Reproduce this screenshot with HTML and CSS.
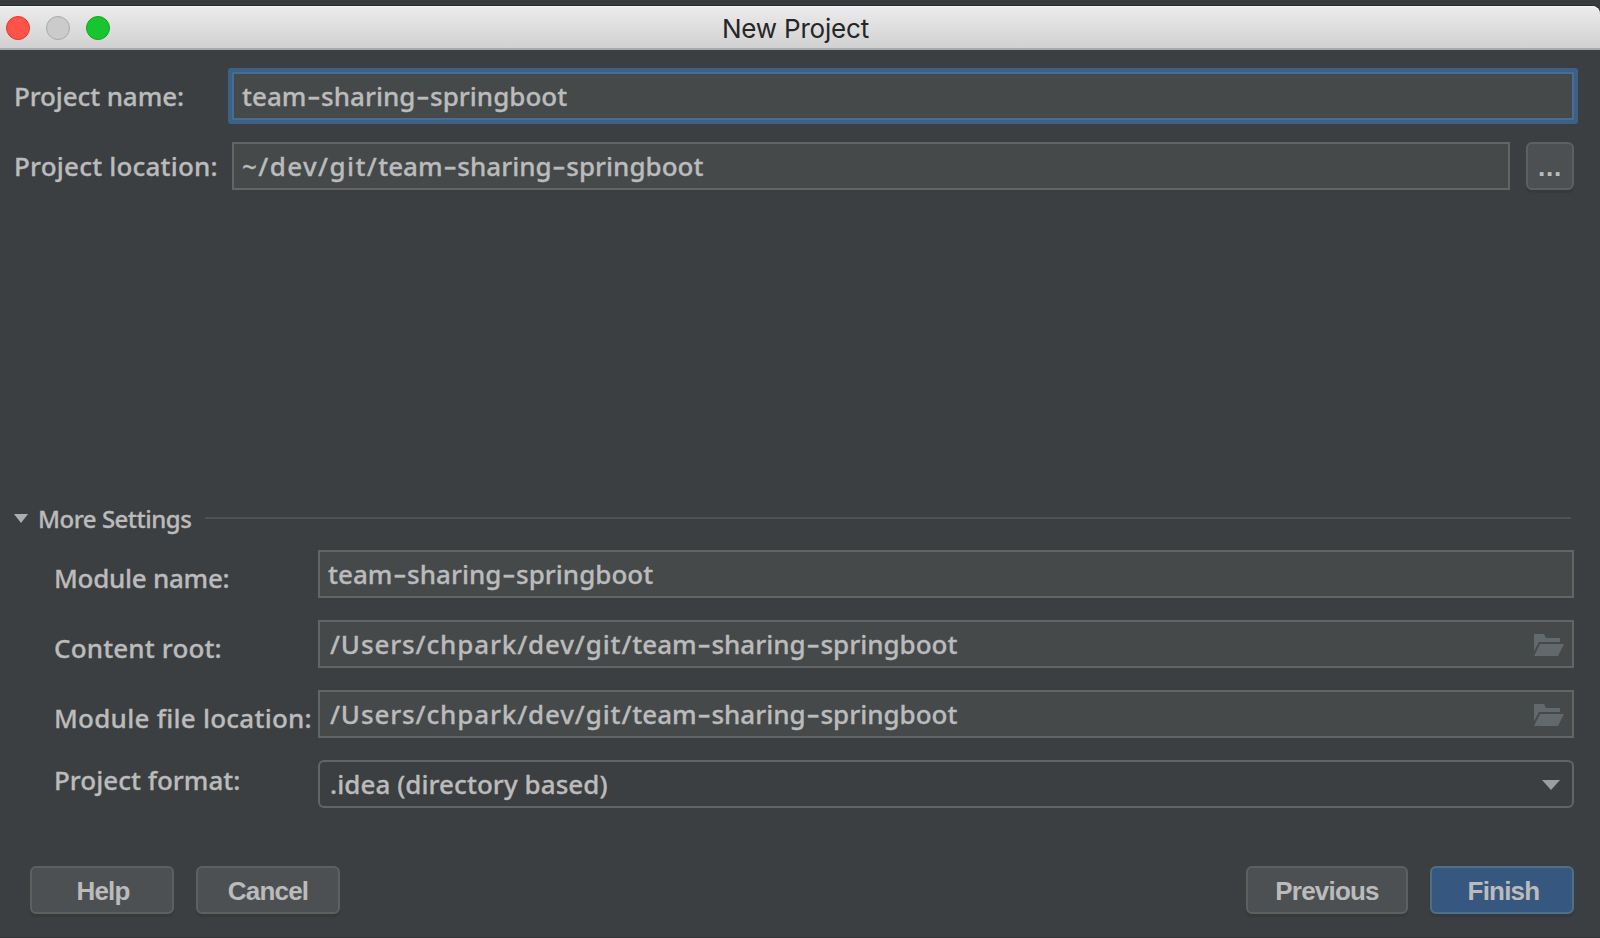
FILE: index.html
```
<!DOCTYPE html>
<html lang="en">
<head>
<meta charset="utf-8">
<title>New Project</title>
<link rel="stylesheet" href="styles.css">
</head>
<body>
<div class="window">
  <header class="titlebar">
    <div class="lights"><i class="light close"></i><i class="light minimize"></i><i class="light zoom"></i></div>
    <h1 class="title">New Project</h1>
  </header>
  <main class="content">
    <div class="row">
      <label class="label name">Project name:</label>
      <div class="field focused">team<span class="dash">-</span>sharing<span class="dash">-</span>springboot</div>
    </div>
    <div class="row">
      <label class="label location">Project location:</label>
      <div class="field"><span class="home">~/dev/git/</span>team<span class="dash">-</span>sharing<span class="dash">-</span>springboot</div>
      <button class="button browse">...</button>
    </div>
    <section class="more">
      <div class="more-head">
        <svg class="disclosure" width="14" height="9" viewBox="0 0 14 9"><path d="M0 0h14L7 9z"/></svg>
        <h2 class="more-title">More Settings</h2>
        <div class="rule"></div>
      </div>
      <div class="settings">
        <label class="label low module">Module name:</label>
        <div class="field">team<span class="dash">-</span>sharing<span class="dash">-</span>springboot</div>
        <label class="label low content-root">Content root:</label>
        <div class="field path">
          <span><span class="root">/Users/chpark/dev/git/</span>team<span class="dash">-</span>sharing<span class="dash">-</span>springboot</span>
          <svg class="folder" width="30" height="22" viewBox="0 0 30 22"><path d="M0 0h10l2 4h14v4H5L0 17.500z"/><path d="M6 10h24l-6 12H0z"/></svg>
        </div>
        <label class="label low file">Module file location:</label>
        <div class="field path">
          <span><span class="root">/Users/chpark/dev/git/</span>team<span class="dash">-</span>sharing<span class="dash">-</span>springboot</span>
          <svg class="folder" width="30" height="22" viewBox="0 0 30 22"><path d="M0 0h10l2 4h14v4H5L0 17.500z"/><path d="M6 10h24l-6 12H0z"/></svg>
        </div>
        <label class="label high">Project format:</label>
        <div class="field combo">.idea (directory based)
          <svg class="arrow" width="18" height="10" viewBox="0 0 18 10"><path d="M0 0h18L9 10z"/></svg>
        </div>
      </div>
    </section>
    <footer class="buttons">
      <button class="button help">Help</button>
      <button class="button">Cancel</button>
      <span class="spacer"></span>
      <button class="button previous">Previous</button>
      <button class="button primary">Finish</button>
    </footer>
  </main>
</div>
</body>
</html>
```
FILE: styles.css
```
* { box-sizing: border-box; }
body { margin: 0; background: #383b3d; }
.window {
  display: flex;
  flex-direction: column;
  height: 938px;
  padding-top: 6px;
  overflow: hidden;
  color: #bbb;
  font: 500 26px/48px "Noto Sans", sans-serif;
  white-space: nowrap;
  border-bottom: 1px solid #313335;
}
.titlebar {
  display: grid;
  grid-template-columns: 1fr auto 1fr;
  align-items: center;
  height: 44px;
  padding: 0 10px 0 6px;
  background: linear-gradient(#ececec, #d1d1d1);
  border-bottom: 2px solid #a9a9a9;
  border-top-right-radius: 8px;
  box-shadow: 0 -1px #29262a, inset 0 1px #f8f8f8;
}
.lights { display: flex; gap: 16px; }
.light { width: 24px; height: 24px; border-radius: 50%; border: 1px solid; }
.close { background: #ff5249; border-color: #e0392f; }
.minimize { background: #cbcbcb; border-color: #a9a9a9; }
.zoom { background: #19c52f; border-color: #12a622; }
.title {
  margin: 0 2px 0 -3px;
  padding-top: 2px;
  color: #262626;
  font: 400 26px/42px Inter, sans-serif;
  letter-spacing: -0.2px;
}
.content {
  flex: 1;
  display: flex;
  flex-direction: column;
  padding: 22px 26px 0 14px;
  background: #3c3f41;
}
.row { display: flex; margin-bottom: 22px; }
.row .label { width: 218px; }
.row .field { flex: 1; }
.label, .field, .more-title { -webkit-text-stroke: 0.3px #bbb; }
.label { height: 48px; }
.name { letter-spacing: -0.12px; }
.location { letter-spacing: 0.2px; }
.low { padding-top: 4px; }
.high { margin-top: -4px; }
.module { letter-spacing: -0.28px; }
.content-root { letter-spacing: 0.15px; }
.file { letter-spacing: 0.25px; }
.field {
  height: 48px;
  padding: 0 8px;
  line-height: 44px;
  background: #45494a;
  border: 2px solid #646464;
}
.focused {
  border-color: #466d94;
  box-shadow: 0 0 0 4px #3d6185;
  border-radius: 1px;
}
.dash { font: 400 32px/0 Inter, sans-serif; vertical-align: -2px; }
.home { letter-spacing: 1.4px; }
.root { letter-spacing: 0.86px; }
.path, .combo { display: flex; align-items: center; padding-left: 10px; }
.combo { background: #3c3f41; border-radius: 6px; padding-right: 12px; letter-spacing: 0.06px; }
.folder { margin: 2px 0 0 auto; fill: #62696d; }
.arrow { margin: 2px 0 0 auto; fill: #9b9ea1; }
.button {
  width: 144px;
  height: 48px;
  padding: 2px 0 0;
  color: #bbb;
  background: #4c5052;
  border: 2px solid #5e6060;
  border-radius: 6px;
  box-shadow: 0 3px 1px #37393b;
  font: bold 26px/42px "Liberation Sans", sans-serif;
  letter-spacing: -0.8px;
}
.browse { width: 48px; margin-left: 16px; letter-spacing: 0.8px; }
.more { margin-top: 288px; }
.more-head { display: flex; align-items: center; height: 36px; margin-bottom: 14px; }
.disclosure { fill: #adadad; }
.more-title {
  margin: 0 0 0 10px;
  padding-top: 2px;
  width: 167px;
  font: 500 24px/36px "Noto Sans", sans-serif;
  letter-spacing: -0.5px;
}
.rule { flex: 1; height: 2px; margin-right: 3px; background: #515151; }
.settings {
  display: grid;
  grid-template-columns: 264px 1fr;
  row-gap: 22px;
  padding-left: 40px;
}
.buttons { display: flex; gap: 22px; margin-top: 58px; padding-left: 16px; }
.spacer { flex: 1; }
.help { padding-left: 2px; }
.previous { width: 162px; }
.primary { background: #365880; border-color: #4c708c; padding-left: 3px; }
```
